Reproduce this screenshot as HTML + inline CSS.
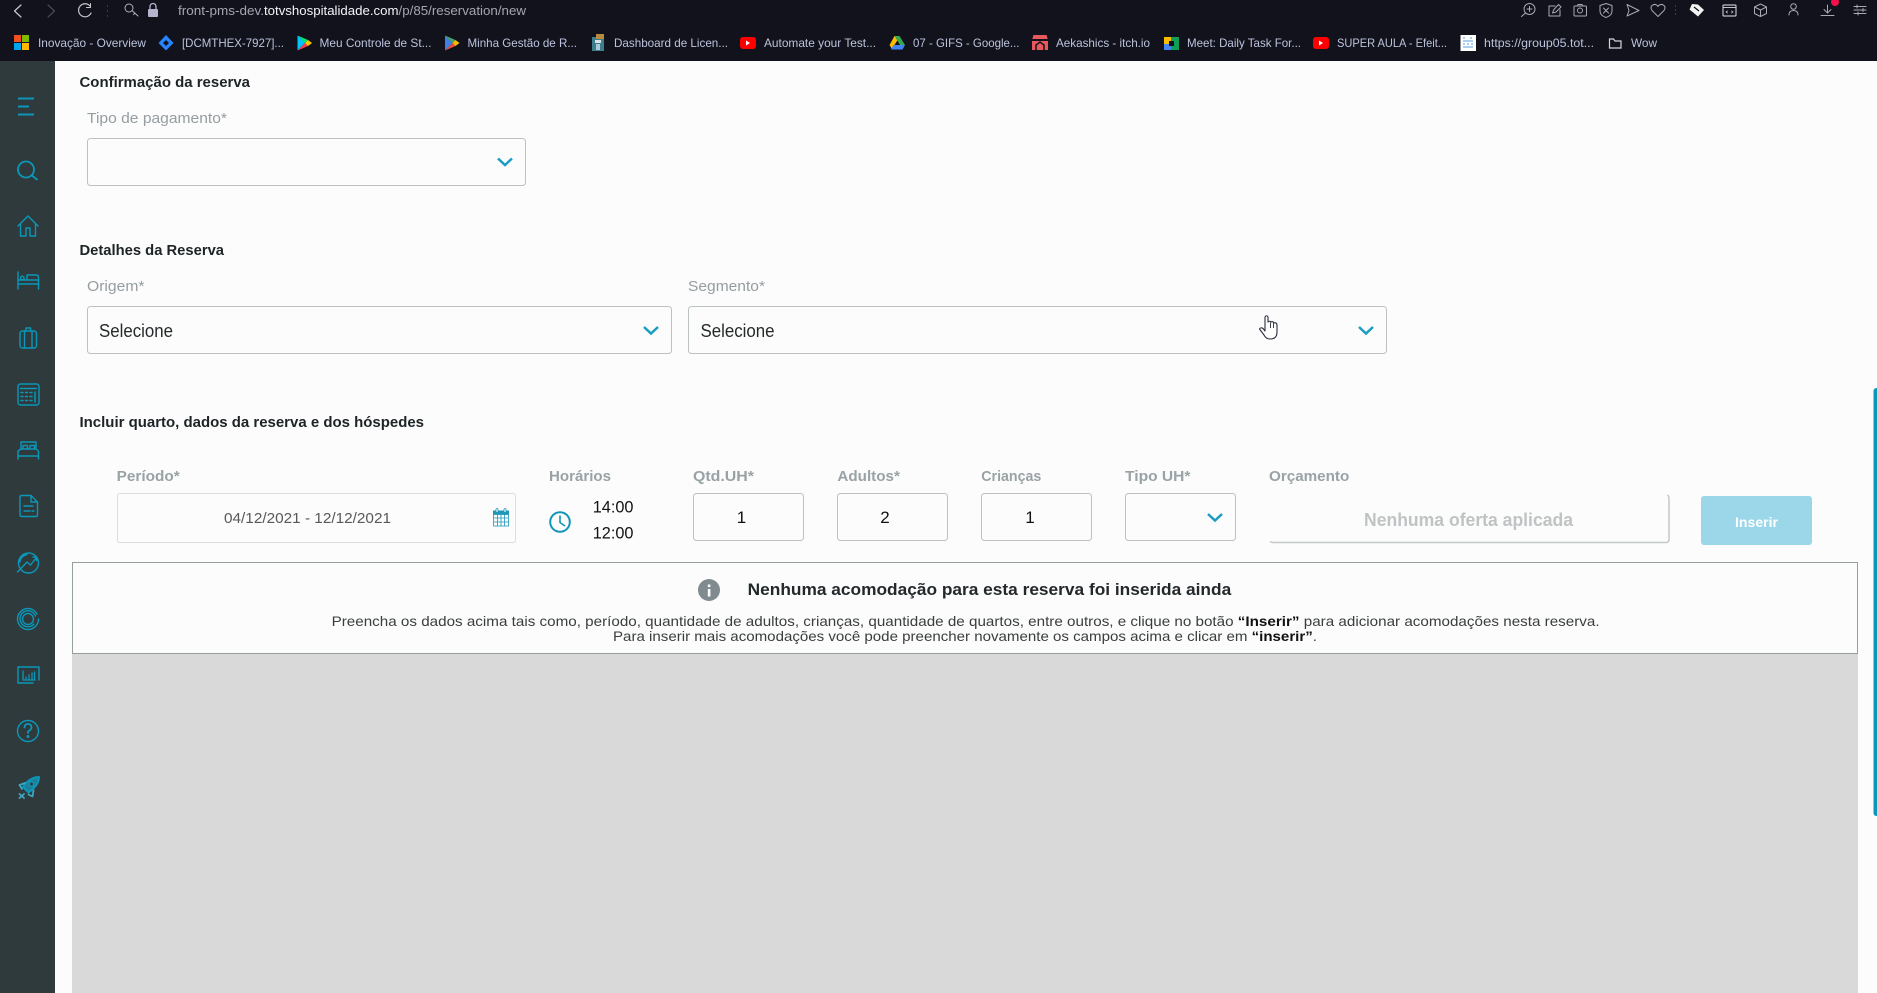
<!DOCTYPE html>
<html lang="pt-BR">
<head>
<meta charset="utf-8">
<title>Nova reserva</title>
<style>
html,body{margin:0;padding:0;width:1877px;height:993px;overflow:hidden;background:#fcfcfc}
svg{display:block}
text{font-family:"Liberation Sans",sans-serif}
.bm{font-size:12px;fill:#bcc3dc}
.url{font-size:13px;fill:#a6a6b0}
.h{font-size:14.5px;font-weight:700;fill:#1e2426}
.l{font-size:15px;fill:#959da0}
.lb{font-size:14.5px;font-weight:700;fill:#99a2a5}
.f{fill:#fcfcfc;stroke:#bcc1c2;stroke-width:1}
.chev{fill:none;stroke:#1a9dbf;stroke-width:2.5}
.si{fill:none;stroke:#0a97b9;stroke-width:1.4;stroke-linejoin:round;stroke-linecap:round}
.ti{fill:none;stroke:#a9a9b4;stroke-width:1;stroke-linejoin:round;stroke-linecap:round}
.p{font-size:14px;fill:#3a3d3e}
</style>
</head>
<body>
<svg width="1877" height="993" viewBox="0 0 1877 993" xmlns="http://www.w3.org/2000/svg">
<rect width="1877" height="993" fill="#fcfcfc"/>

<!-- browser chrome -->
<rect width="1877" height="61" fill="#12121c"/>
<g class="ti">
  <path d="M21 5 L14.500 11 L21 17" stroke-width="1.200" stroke="#c8c8d0"/>
  <path d="M48 5 L54.500 11 L48 17" stroke="#4a4a55" stroke-width="1.200"/>
  <path d="M90 6 A6.500 6.500 0 1 0 91 13" stroke-width="1.200" stroke="#c8c8d0"/>
  <path d="M90.500 3.500 V7.500 H86.500" stroke="#c8c8d0"/>
  <circle cx="129" cy="8" r="4" stroke="#b0b0b8"/>
  <path d="M132 10.500 L138 16 M135 13 L133.500 14.500" stroke="#b0b0b8"/>
</g>
<rect x="107" y="5" width="1" height="2" fill="#3a3a45"/><rect x="107" y="10" width="1" height="2" fill="#3a3a45"/><rect x="107" y="15" width="1" height="2" fill="#3a3a45"/>
<rect x="148" y="9" width="10" height="8" rx="1" fill="#b5b3ce"/>
<path d="M150 9 V6.500 A3 3 0 0 1 156 6.500 V9" fill="none" stroke="#b5b3ce" stroke-width="1.300"/>
<text class="url" x="178" y="15" textLength="86" lengthAdjust="spacingAndGlyphs">front-pms-dev.</text>
<text class="url" x="264" y="15" textLength="134.500" lengthAdjust="spacingAndGlyphs" style="fill:#f4f4f6">totvshospitalidade.com</text>
<text class="url" x="398.500" y="15" textLength="127.500" lengthAdjust="spacingAndGlyphs">/p/85/reservation/new</text>

<!-- right toolbar icons -->
<g class="ti">
  <circle cx="1529.500" cy="9" r="5.500"/><path d="M1525.500 13 L1521.500 16.500 M1529.500 6.500 V11.500 M1527 9 H1532"/>
  <path d="M1549 6 H1555 M1549 6 V16 H1560 V10 M1552.500 13 L1553.500 10 L1558.500 4.500 L1561 7 L1556 12 Z"/>
  <rect x="1574" y="6" width="12.500" height="10" rx="1"/><path d="M1577.500 6 L1578 4.500 H1582 L1583 6"/><circle cx="1580" cy="10.500" r="2.500"/>
  <path d="M1606 3.500 L1612 5.500 V11 Q1612 15.500 1606 17.500 Q1600 15.500 1600 11 V5.500 Z M1603.500 8 L1608.500 13 M1608.500 8 L1603.500 13"/>
  <path d="M1627 4.500 L1639 10.500 L1627 16 L1629 10.500 Z"/>
  <path d="M1658 16.500 L1652 10.500 Q1650 7.500 1652 5.500 Q1655.500 3 1658 6.500 Q1660.500 3 1664 5.500 Q1666 7.500 1664 10.500 Z"/>
  <rect x="1723" y="5" width="13" height="11" rx="1" stroke="#c0c0c8" stroke-width="1.200"/><path d="M1723 7.500 H1736" stroke="#c0c0c8"/><path d="M1727.500 11 L1726 12 L1727.500 13 M1731.500 11 L1733 12 L1731.500 13" stroke="#c0c0c8" stroke-width=".8"/>
  <path d="M1760.500 4 L1766.500 7 V13.500 L1760.500 16.500 L1754.500 13.500 V7 Z M1754.500 7 L1760.500 10 L1766.500 7 M1760.500 10 V16.500"/>
  <circle cx="1793.500" cy="6.500" r="2.800"/><path d="M1789 15 Q1789 10.500 1793.500 10.500 Q1798 10.500 1798 15"/>
  <path d="M1827.500 5 V13 M1824 9.500 L1827.500 13 L1831 9.500 M1821 15.500 H1834"/>
  <path d="M1854 6.500 H1866 M1854 10 H1866 M1854 13.500 H1866 M1857 5 V8 M1863 8.500 V11.500 M1858 12 V15"/>
</g>
<rect x="1675" y="5" width="1" height="2" fill="#3a3a45"/><rect x="1675" y="9" width="1" height="2" fill="#3a3a45"/><rect x="1675" y="13" width="1" height="2" fill="#3a3a45"/>
<path d="M1692 4 L1698 4.500 L1704 10 L1698 16.500 L1689.500 9.500 Z" fill="#f3f3f3"/>
<path d="M1694 7 L1699 11" stroke="#12121c" stroke-width="1.200"/>
<circle cx="1835" cy="2" r="4" fill="#f5104d"/>

<!-- bookmarks -->
<rect x="14" y="35" width="7" height="7" fill="#f25022"/><rect x="22" y="35" width="7" height="7" fill="#7fba00"/>
<rect x="14" y="43" width="7" height="7" fill="#00a4ef"/><rect x="22" y="43" width="7" height="7" fill="#ffb900"/>
<text class="bm" x="38" y="47" textLength="108" lengthAdjust="spacingAndGlyphs">Inovação - Overview</text>
<path d="M166 35 L173.500 43 L166 50.500 L158.500 43 Z" fill="#2684ff"/><path d="M166 40 L169 43 L166 46 L163 43 Z" fill="#12121c"/>
<text class="bm" x="182" y="47" textLength="102" lengthAdjust="spacingAndGlyphs">[DCMTHEX-7927]...</text>
<path d="M297.500 35.500 V50.500 L305 43 Z" fill="#00c3ff"/><path d="M297.500 35.500 L305 43 L308 40 Z" fill="#00e676"/><path d="M297.500 50.500 L305 43 L308 46 Z" fill="#ff3d47"/><path d="M305 43 L308 40 L312 43 L308 46 Z" fill="#ffc400"/>
<text class="bm" x="319.500" y="47" textLength="112" lengthAdjust="spacingAndGlyphs">Meu Controle de St...</text>
<path d="M445 35.500 V50.500 L452.500 43 Z" fill="#3f7fe8"/><path d="M445 35.500 L452.500 43 L455.500 40 Z" fill="#4aa564"/><path d="M445 50.500 L452.500 43 L455.500 46 Z" fill="#e8503a"/><path d="M452.500 43 L455.500 40 L459.500 43 L455.500 46 Z" fill="#f8bb00"/>
<text class="bm" x="467.500" y="47" textLength="109.500" lengthAdjust="spacingAndGlyphs">Minha Gestão de R...</text>
<rect x="592" y="37" width="12" height="14" fill="#3f7c8c"/><rect x="596" y="34" width="8" height="5" fill="#b98a3e"/><rect x="595" y="40" width="6" height="3" fill="#d8e4e8"/><rect x="596" y="44" width="4" height="6" fill="#a9cdd8"/>
<text class="bm" x="614" y="47" textLength="114" lengthAdjust="spacingAndGlyphs">Dashboard de Licen...</text>
<rect x="740" y="37" width="16" height="12" rx="3" fill="#f00"/><path d="M746 40.500 V45.500 L750 43 Z" fill="#fff"/>
<text class="bm" x="764" y="47" textLength="112" lengthAdjust="spacingAndGlyphs">Automate your Test...</text>
<path d="M894.500 36 H899.500 L897 41 L892 49 L889.500 45 Z" fill="#fbbc04"/><path d="M899.500 36 L905 45 H900 L894.500 36 Z" fill="#34a853"/><path d="M893.500 45 H905 L902.500 49.500 H891 Z" fill="#4285f4"/>
<text class="bm" x="913" y="47" textLength="106.500" lengthAdjust="spacingAndGlyphs">07 - GIFS - Google...</text>
<path d="M1033.500 35 H1046.500 L1048 40 V50 H1032 V40 Z" fill="#e8595d"/><rect x="1032" y="39" width="16" height="2" fill="#12121c"/><path d="M1036 50 V45 L1040 42 L1044 45 V50" fill="none" stroke="#12121c" stroke-width="1.500"/>
<text class="bm" x="1056" y="47" textLength="94" lengthAdjust="spacingAndGlyphs">Aekashics - itch.io</text>
<rect x="1164" y="37" width="7" height="7" fill="#fbbc04"/><rect x="1171" y="37" width="8" height="7" fill="#0f9d58"/><rect x="1164" y="44" width="7" height="6" fill="#4285f4"/><rect x="1171" y="44" width="8" height="6" fill="#0f9d58"/><rect x="1169" y="41" width="5" height="5" fill="#12121c"/>
<text class="bm" x="1187" y="47" textLength="114" lengthAdjust="spacingAndGlyphs">Meet: Daily Task For...</text>
<rect x="1313" y="37" width="16" height="12" rx="3" fill="#f00"/><path d="M1319 40.500 V45.500 L1323 43 Z" fill="#fff"/>
<text class="bm" x="1337" y="47" textLength="110" lengthAdjust="spacingAndGlyphs">SUPER AULA - Efeit...</text>
<rect x="1460.500" y="35" width="15.500" height="16" fill="#fff"/>
<path d="M1463 38 H1465 M1470 38 H1472 M1463 41 H1473 M1463 44 H1465 M1467 44 H1469 M1471 44 H1473 M1463 47 H1473" stroke="#8fc0ea" stroke-width="1.500"/>
<text class="bm" x="1484" y="47" textLength="110" lengthAdjust="spacingAndGlyphs">https://group05.tot...</text>
<path d="M1609.500 39 H1613.500 L1615 41 H1621 V48 H1609.500 Z" fill="none" stroke="#d6d6dc" stroke-width="1.200"/>
<text class="bm" x="1631" y="47" textLength="26" lengthAdjust="spacingAndGlyphs">Wow</text>

<!-- sidebar -->
<rect x="0" y="61" width="55" height="932" fill="#2f3a3c"/>
<g class="si">
  <path d="M18 98.500 H34 M18 106.500 H29 M18 114.500 H34" stroke-width="2" stroke-linecap="butt"/>
  <circle cx="26" cy="169.500" r="8" stroke-width="1.800"/><path d="M32 175.500 L37 179.500" stroke-width="1.800"/>
  <path d="M18 226 L28 216 L38 226 M20.500 224 V236 H26 V228 H30 V236 H35.500 V224"/>
  <path d="M18 272 V289 M18 284 H38.500 V289 M38.500 284 V277.500 Q38.500 275 36 275 H27 V280 H18 M18 280 H38"/>
  <circle cx="22.300" cy="278" r="1.800"/>
  <rect x="20" y="331" width="16.500" height="17" rx="2.500"/><path d="M24.500 331 V348 M32 331 V348 M26 331 V328 H30.500 V331"/>
  <rect x="18" y="384" width="21" height="21" rx="2.500"/><path d="M20.500 388.500 H36.500"/>
  <path d="M21 392.500 H23 M25.500 392.500 H27.500 M30 392.500 H32 M21 396.500 H23 M25.500 396.500 H27.500 M30 396.500 H32 M21 400.500 H23 M25.500 400.500 H27.500 M30 400.500 H32 M35 392 V402" stroke-width="1.500"/>
  <path d="M21 449 V442 H36 V449 M18 456 V451 L21 449 H36 L38.500 451 V456 M18 456 H38.500 M18 456 V459 M38.500 456 V459 M23 449 V445.500 H27.500 V449 M30 449 V445.500 H34.500 V449"/>
  <path d="M20 497 Q20 495.500 21.500 495.500 H31 L37.500 502 V515 Q37.500 516.500 36 516.500 H21.500 Q20 516.500 20 515 Z M31 495.500 V502 H37.500 M24 506 H33 M24 511 H30 M32 511 H34"/>
  <circle cx="28.500" cy="563" r="10"/><path d="M19.700 562 A9 9 0 0 1 27 554.500 M17.500 572 L27 562 L30.500 565 L36 558 M33 557 H36.500 V560.500"/>
  <circle cx="28" cy="619" r="5.500"/><path d="M38.500 619 A10.500 10.500 0 1 1 28 608.500 A10 10 0 0 1 37 614 M34 624 A8 8 0 1 1 35.500 616"/>
  <path d="M18 667 H39 V680 M18 667 V683 H33"/><path d="M23 671 V680 H35 M26 677 V679 M29 675 V679 M32 673 V679 M34.500 672 V679" stroke-width="1.300"/>
  <circle cx="28" cy="731" r="10.500"/>
  <path d="M24.500 727.500 Q24.500 724 28 724 Q31.500 724 31.500 727.500 Q31.500 729.500 28 731.500 V733" stroke-width="1.800"/><circle cx="28" cy="736.500" r=".8" stroke-width="1.400"/>
  <path d="M39 777 Q32 777 26 783 L23 787 L28.500 792.500 L33 789 Q39 783 39 777 Z" stroke-width="2" fill="#1f7f98"/>
  <circle cx="31.500" cy="784" r="2.200" stroke-width="1.500" fill="#2f3a3c"/>
  <path d="M25 783 L19.500 785 L22 789 M33.500 790.500 L32.500 796.500 L28.500 794.500 M19.500 794 L24 798 M24 794 L19.500 798" stroke-width="1.800" stroke="#3ea6c2"/>
</g>

<!-- Confirmação -->
<text class="h" x="79.500" y="87" textLength="170.500" lengthAdjust="spacingAndGlyphs">Confirmação da reserva</text>
<text class="l" x="87" y="123" textLength="140" lengthAdjust="spacingAndGlyphs">Tipo de pagamento*</text>
<rect class="f" x="87.500" y="138.500" width="438" height="47" rx="3"/>
<path class="chev" d="M498 158.500 L505 165 L512 158.500"/>

<!-- Detalhes -->
<text class="h" x="79.500" y="255" textLength="144.500" lengthAdjust="spacingAndGlyphs">Detalhes da Reserva</text>
<text class="l" x="87" y="291" textLength="57.500" lengthAdjust="spacingAndGlyphs">Origem*</text>
<rect class="f" x="87.500" y="306.500" width="584" height="47" rx="3"/>
<text x="99" y="337" font-size="18" fill="#26292a" textLength="74" lengthAdjust="spacingAndGlyphs">Selecione</text>
<path class="chev" d="M644 327 L651 333.500 L658 327"/>
<text class="l" x="688" y="291" textLength="77" lengthAdjust="spacingAndGlyphs">Segmento*</text>
<rect class="f" x="688.500" y="306.500" width="698" height="47" rx="3"/>
<text x="700.500" y="337" font-size="18" fill="#26292a" textLength="74" lengthAdjust="spacingAndGlyphs">Selecione</text>
<path class="chev" d="M1359 327 L1366 333.500 L1373 327"/>
<path d="M1265 331 L1265 317 Q1266.500 314.500 1268 317 L1268 322 Q1270 320.500 1271 322 Q1273 321 1274 323 Q1276.500 322 1277 325 L1277 332 Q1277 339 1270 339 Q1266 339 1264 335 L1259.500 329 Q1260.500 327 1263 328.500 Z" fill="#fff" stroke="#2a2c3a" stroke-width="1.100" stroke-linejoin="round"/>
<path d="M1270.500 322.500 V328 M1273.500 323 V328" stroke="#2a2c3a" stroke-width=".9"/>

<!-- Incluir -->
<text class="h" x="79.500" y="427" textLength="344.500" lengthAdjust="spacingAndGlyphs">Incluir quarto, dados da reserva e dos hóspedes</text>

<text class="lb" x="116.700" y="481" textLength="63" lengthAdjust="spacingAndGlyphs">Período*</text>
<path d="M120 493.500 H513 Q515.500 493.500 515.500 496 V540 Q515.500 542.500 513 542.500 H120 Q117.500 542.500 117.500 540 V496 Q117.500 493.500 120 493.500 Z" fill="#fcfcfc" stroke="#dcdede"/>
<text x="224" y="523" font-size="15" fill="#57595a" textLength="167" lengthAdjust="spacingAndGlyphs">04/12/2021 - 12/12/2021</text>
<g fill="none" stroke="#1d96b8" stroke-width=".8">
  <rect x="493.500" y="511" width="15" height="15" fill="#fdfdfd"/>
  <rect x="493.500" y="511" width="15" height="3.500" fill="#1d96b8"/>
  <path d="M493.500 518 H508.500 M493.500 522 H508.500 M497.500 514 V526 M501 514 V526 M504.500 514 V526"/>
  <rect x="496" y="508.500" width="2" height="4" rx="1" fill="#fdfdfd"/><rect x="504" y="508.500" width="2" height="4" rx="1" fill="#fdfdfd"/>
</g>

<text class="lb" x="549" y="481" textLength="62" lengthAdjust="spacingAndGlyphs">Horários</text>
<circle cx="560" cy="522" r="9.800" fill="none" stroke="#1296b8" stroke-width="2"/>
<path d="M560 515.500 V522.500 L565 526" fill="none" stroke="#1296b8" stroke-width="1.600"/>
<text x="592.700" y="512.500" font-size="17" fill="#111" textLength="40.800" lengthAdjust="spacingAndGlyphs">14:00</text>
<text x="592.700" y="538.500" font-size="17" fill="#111" textLength="40.800" lengthAdjust="spacingAndGlyphs">12:00</text>

<text class="lb" x="693" y="481" textLength="61" lengthAdjust="spacingAndGlyphs">Qtd.UH*</text>
<rect class="f" x="693.500" y="493.500" width="110" height="47" rx="3"/>
<text x="741.500" y="523" font-size="17" fill="#111" text-anchor="middle">1</text>

<text class="lb" x="837.400" y="481" textLength="62.500" lengthAdjust="spacingAndGlyphs">Adultos*</text>
<rect class="f" x="837.500" y="493.500" width="110" height="47" rx="3"/>
<text x="885" y="523" font-size="17" fill="#111" text-anchor="middle">2</text>

<text class="lb" x="981.300" y="481" textLength="60" lengthAdjust="spacingAndGlyphs">Crianças</text>
<rect class="f" x="981.500" y="493.500" width="110" height="47" rx="3"/>
<text x="1030" y="523" font-size="17" fill="#111" text-anchor="middle">1</text>

<text class="lb" x="1125" y="481" textLength="65.500" lengthAdjust="spacingAndGlyphs">Tipo UH*</text>
<rect class="f" x="1125.500" y="493.500" width="110" height="47" rx="3"/>
<path class="chev" d="M1208 514 L1215 520.500 L1222 514"/>

<text class="lb" x="1269" y="481" textLength="80.300" lengthAdjust="spacingAndGlyphs">Orçamento</text>
<path d="M1270 541.500 Q1272 542.500 1274 542.500 H1666 Q1669 542.500 1669 539 V499 Q1669 496 1667.500 495" fill="none" stroke="#c4c8c9" stroke-width="1.500"/>
<text x="1364" y="526" font-size="18" font-weight="700" fill="#bfc3c4" textLength="209" lengthAdjust="spacingAndGlyphs">Nenhuma oferta aplicada</text>

<rect x="1701" y="496" width="111" height="49" rx="3" fill="#9bd7e8"/>
<text x="1735" y="527" font-size="14" font-weight="700" fill="#fff" textLength="43" lengthAdjust="spacingAndGlyphs">Inserir</text>

<!-- info box -->
<rect x="72.500" y="562.500" width="1785" height="91" fill="#fcfcfc" stroke="#959fa2"/>
<circle cx="709" cy="590" r="11" fill="#7f8b8f"/>
<rect x="707.800" y="589" width="2.600" height="7.500" fill="#fcfcfc"/><rect x="707.800" y="584.500" width="2.600" height="2.600" fill="#fcfcfc"/>
<text x="747.700" y="595" font-size="17" font-weight="700" fill="#23282a" textLength="483.500" lengthAdjust="spacingAndGlyphs">Nenhuma acomodação para esta reserva foi inserida ainda</text>
<text class="p" x="331.600" y="626" textLength="1268" lengthAdjust="spacingAndGlyphs">Preencha os dados acima tais como, período, quantidade de adultos, crianças, quantidade de quartos, entre outros, e clique no botão <tspan font-weight="700" fill="#111">“Inserir”</tspan> para adicionar acomodações nesta reserva.</text>
<text class="p" x="613" y="641" textLength="704" lengthAdjust="spacingAndGlyphs">Para inserir mais acomodações você pode preencher novamente os campos acima e clicar em <tspan font-weight="700" fill="#111">“inserir”</tspan>.</text>

<!-- grey area -->
<rect x="72" y="654" width="1786" height="339" fill="#d9d9d9"/>

<!-- scrollbar -->
<rect x="1873.500" y="388" width="6" height="428" rx="3" fill="#0a97b9"/>
</svg>
</body>
</html>
